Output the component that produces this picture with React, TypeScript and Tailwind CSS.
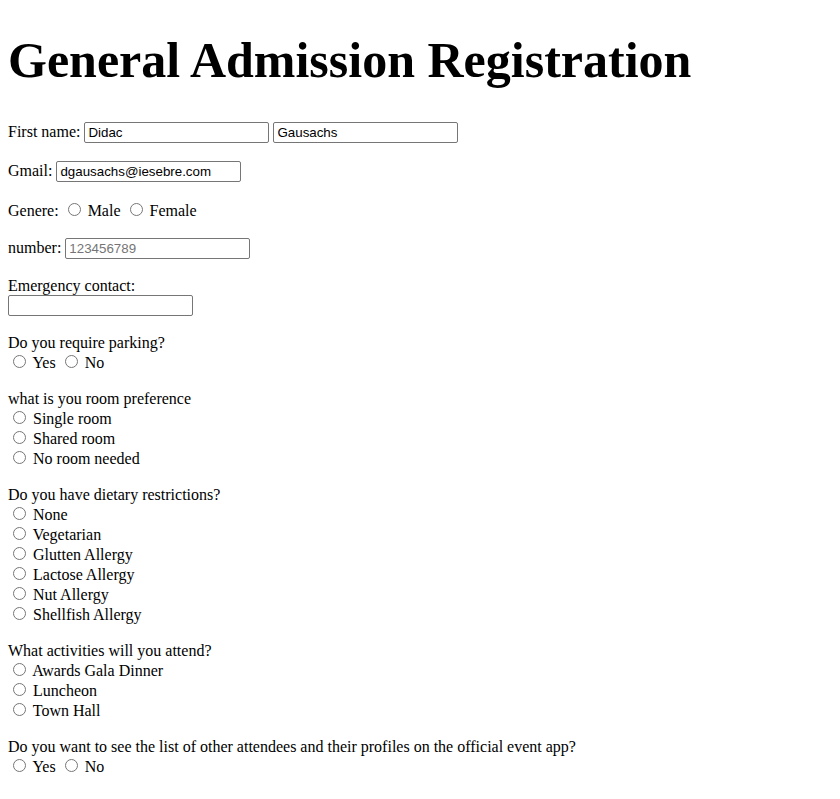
const field =
  "inline-block w-[185px] h-[21px] border border-[#767676] rounded-[2px] px-[3px] py-[2px] font-['Liberation_Sans',Arial,sans-serif] text-[13.333px] leading-[15px] text-black bg-white placeholder:text-[#757575] align-baseline";

const radio = "m-[3px_3px_0_5px] w-[13px] h-[13px] align-baseline";

function Radio({ name, label }: { name: string; label: string }) {
  return (
    <>
      <input type="radio" name={name} className={radio} /> {label}
    </>
  );
}

function RadioList({ name, options }: { name: string; options: string[] }) {
  return (
    <>
      {options.map((o) => (
        <span key={o}>
          <br />
          <Radio name={name} label={o} />
        </span>
      ))}
    </>
  );
}

export default function App() {
  return (
    <div className="px-2 bg-white text-black font-['Liberation_Serif','Times_New_Roman',serif] text-base [line-height:normal]">
      <h1 className="text-[50px] font-bold mt-[31px] mb-[32.5px] [line-height:normal]">General Admission Registration</h1>
      <form>
        <p className="my-[18px]">
          First name: <input className={field} defaultValue="Didac" />{" "}
          <input className={field} defaultValue="Gausachs" />
        </p>
        <p className="my-[18px]">
          Gmail: <input className={field} defaultValue="dgausachs@iesebre.com" />
        </p>
        <p className="my-[18px]">
          Genere: <Radio name="gen" label="Male" /> <Radio name="gen" label="Female" />
        </p>
        <p className="my-[18px]">
          number: <input className={field} placeholder="123456789" />
        </p>
        <p className="my-[18px]">
          Emergency contact:
          <br />
          <input className={field} />
        </p>
        <p className="my-[18px]">
          Do you require parking?
          <br />
          <Radio name="park" label="Yes" /> <Radio name="park" label="No" />
        </p>
        <p className="my-[18px]">
          what is you room preference
          <RadioList name="room" options={["Single room", "Shared room", "No room needed"]} />
        </p>
        <p className="my-[18px]">
          Do you have dietary restrictions?
          <RadioList
            name="diet"
            options={["None", "Vegetarian", "Glutten Allergy", "Lactose Allergy", "Nut Allergy", "Shellfish Allergy"]}
          />
        </p>
        <p className="my-[18px]">
          What activities will you attend?
          <RadioList name="act" options={["Awards Gala Dinner", "Luncheon", "Town Hall"]} />
        </p>
        <p className="my-[18px]">
          Do you want to see the list of other attendees and their profiles on the official event app?
          <br />
          <Radio name="app" label="Yes" /> <Radio name="app" label="No" />
        </p>
      </form>
    </div>
  );
}
